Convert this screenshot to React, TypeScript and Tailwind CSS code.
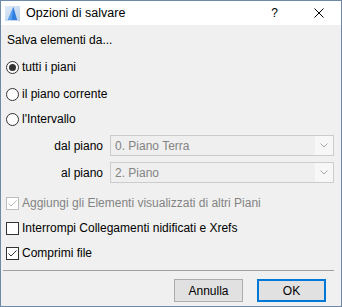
import React from "react";

const font = { fontFamily: '"Liberation Sans", Arial, sans-serif' };

function Radio({ checked }: { checked?: boolean }) {
  return (
    <span className="w-[13px] h-[13px] rounded-full border border-[#333333] bg-white flex items-center justify-center shrink-0">
      {checked && <span className="w-[7px] h-[7px] rounded-full bg-[#333333]" />}
    </span>
  );
}

function Check({ checked, disabled }: { checked?: boolean; disabled?: boolean }) {
  const c = disabled ? "#bcbcbc" : "#333333";
  return (
    <span
      className={`w-[13px] h-[13px] border ${disabled ? "border-[#bcbcbc]" : "border-[#333333]"} bg-white flex items-center justify-center shrink-0`}
    >
      {checked && (
        <svg width="11" height="11" viewBox="0 0 11 11">
          <path d="M1.5 5.5 L4 8 L9.5 2.5" fill="none" stroke={c} strokeWidth="1" />
        </svg>
      )}
    </span>
  );
}

function Select({ value }: { value: string }) {
  return (
    <div className="w-[224px] h-[21px] border border-[#cccccc] bg-[#efefef] flex items-center">
      <span className="flex-1 pl-[4px] text-[#838383]">{value}</span>
      <span className="w-[18px] h-full bg-[#f7f7f7] flex items-center justify-center">
        <svg width="8" height="5" viewBox="0 0 8 5">
          <path d="M0.5 0.5 L4 4 L7.5 0.5" fill="none" stroke="#a6a6a6" strokeWidth="1" />
        </svg>
      </span>
    </div>
  );
}

export default function App() {
  return (
    <div
      className="w-[342px] h-[307px] border border-[#6f8aa8] bg-[#f0f0f0] flex flex-col text-[12px] text-black leading-none"
      style={font}
    >
      <div className="h-[24px] bg-white flex items-center shrink-0">
        <svg className="ml-[4px]" width="15" height="15" viewBox="0 0 16 16">
          <defs>
            <linearGradient id="g" x1="0" y1="0" x2="1" y2="1">
              <stop offset="0" stopColor="#dfeaf7" />
              <stop offset="1" stopColor="#b9d0ea" />
            </linearGradient>
          </defs>
          <rect x="0" y="0" width="16" height="16" fill="url(#g)" />
          <path d="M3 15 L9 1 L13 15 Z" fill="#2f7fe0" />
          <path d="M3 15 L9 1 L7 15 Z" fill="#5aa0f0" />
        </svg>
        <span className="ml-[6px] text-[12.5px]">Opzioni di salvare</span>
        <span className="ml-auto mr-[36px]">?</span>
        <svg className="mr-[17px]" width="10" height="10" viewBox="0 0 10 10">
          <path d="M0.5 0.5 L9.5 9.5 M9.5 0.5 L0.5 9.5" stroke="#000" strokeWidth="1" />
        </svg>
      </div>
      <div className="flex flex-col pl-[5px]">
        <div className="h-[29px] flex items-center pl-[1px]">Salva elementi da...</div>
        <div className="h-[26px] flex items-center gap-[3px]">
          <Radio checked />
          <span>tutti i piani</span>
        </div>
        <div className="h-[28px] flex items-center gap-[3px]">
          <Radio />
          <span>il piano corrente</span>
        </div>
        <div className="h-[22px] flex items-center gap-[3px]">
          <Radio />
          <span>l'Intervallo</span>
        </div>
        <div className="mt-[5px] flex items-center">
          <span className="w-[97px] text-right">dal piano</span>
          <span className="ml-[7px]">
            <Select value="0. Piano Terra" />
          </span>
        </div>
        <div className="mt-[6px] flex items-center">
          <span className="w-[97px] text-right">al piano</span>
          <span className="ml-[7px]">
            <Select value="2. Piano" />
          </span>
        </div>
        <div className="mt-[7px] h-[26px] flex items-center gap-[3px]">
          <Check checked disabled />
          <span className="text-[#838383]">Aggiungi gli Elementi visualizzati di altri Piani</span>
        </div>
        <div className="h-[24px] flex items-center gap-[3px]">
          <Check />
          <span>Interrompi Collegamenti nidificati e Xrefs</span>
        </div>
        <div className="h-[26px] flex items-center gap-[3px]">
          <Check checked />
          <span>Comprimi file</span>
        </div>
      </div>
      <div className="mt-[4px] ml-[2px] mr-[7px] h-px bg-[#a0a0a0]" />
      <div className="mt-[8px] flex justify-end gap-[14px] pr-[15px]">
        <button className="w-[69px] h-[23px] border border-[#adadad] bg-[#e1e1e1] flex items-center justify-center">
          Annulla
        </button>
        <button className="w-[69px] h-[23px] border-2 border-[#0078d7] bg-[#e1e1e1] flex items-center justify-center">
          OK
        </button>
      </div>
    </div>
  );
}
